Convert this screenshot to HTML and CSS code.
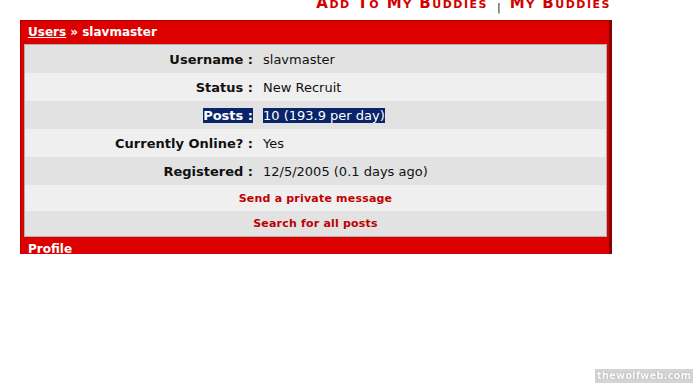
FILE: index.html
```html
<!DOCTYPE html>
<html>
<head>
<meta charset="utf-8">
<link rel="stylesheet" href="styles.css">
</head>
<body>
<div class="top-links">
  <a class="tl" href="#">Add To My Buddies</a>
  <span class="sep">|</span>
  <a class="tl" href="#">My Buddies</a>
</div>
<div class="box">
  <div class="box-head"><a href="#" class="crumb">Users</a> » slavmaster</div>
  <div class="inner">
    <div class="row dark"><div class="lbl">Username :</div><div class="val">slavmaster</div></div>
    <div class="row light"><div class="lbl">Status :</div><div class="val">New Recruit</div></div>
    <div class="row dark"><div class="lbl"><span class="sel">Posts :</span></div><div class="val"><span class="sel">10 (193.9 per day)</span></div></div>
    <div class="row light"><div class="lbl">Currently Online? :</div><div class="val">Yes</div></div>
    <div class="row dark"><div class="lbl">Registered :</div><div class="val">12/5/2005 (0.1 days ago)</div></div>
    <div class="lrow light"><a href="#" class="act">Send a private message</a></div>
    <div class="lrow dark last"><a href="#" class="act">Search for all posts</a></div>
  </div>
  <div class="box-foot">Profile</div>
</div>
<div class="wm">thewolfweb.com</div>
</body>
</html>
```
FILE: styles.css
```css
html, body {
  margin: 0;
  padding: 0;
  background: #fff;
  font-family: "DejaVu Sans", Verdana, sans-serif;
}
body {
  width: 697px;
  height: 384px;
  overflow: hidden;
  position: relative;
}
.top-links {
  display: flex;
  justify-content: flex-end;
  align-items: flex-start;
  width: 611px;
  height: 20px;
  gap: 9px;
}
.tl {
  color: #d20000;
  text-decoration: none;
  font-variant: small-caps;
  font-weight: bold;
  font-size: 15px;
  letter-spacing: 1.5px;
  line-height: 16px;
  margin-top: -5px;
}
.sep {
  color: #222;
  font-size: 11px;
  line-height: 11px;
  margin-top: 2px;
}
.box {
  margin-left: 20px;
  width: 588px;
  height: 233px;
  overflow: hidden;
  background: #dd0000;
  border-top: 1px solid #b00000;
  border-left: 1px solid #b00000;
  border-right: 3px solid #8a0000;
}
.box-head {
  height: 23px;
  padding-left: 7px;
  color: #fff;
  font-weight: bold;
  font-size: 12px;
  line-height: 22px;
}
.crumb {
  color: #fff;
  text-decoration: underline;
}
.inner {
  margin-left: 3px;
  width: 581px;
  border: 1px solid #b0b0b0;
}
.row {
  display: flex;
  align-items: center;
  height: 28px;
  font-size: 13px;
}
.dark { background: #e2e2e2; }
.light { background: #efefef; }
.lbl {
  width: 228px;
  text-align: right;
  font-weight: bold;
  color: #111;
}
.val {
  padding-left: 10px;
  color: #111;
}
.sel {
  background: #0a246a;
  color: #fff;
}
.lrow {
  height: 26px;
  display: flex;
  align-items: center;
  justify-content: center;
}
.lrow.last { height: 25px; }
.act {
  color: #c00000;
  font-weight: bold;
  font-size: 11px;
  letter-spacing: 0.2px;
  text-decoration: none;
}
.box-foot {
  padding-left: 7px;
  padding-top: 5px;
  color: #fff;
  font-weight: bold;
  font-size: 12px;
  line-height: 14px;
}
.wm {
  position: absolute;
  right: 4px;
  bottom: 1px;
  background: #d4d4d4;
  color: #fff;
  font-weight: bold;
  font-size: 10px;
  letter-spacing: 0.1px;
  padding: 0 2px;
  line-height: 14px;
  text-shadow: 0 0 1px #777;
}
```
